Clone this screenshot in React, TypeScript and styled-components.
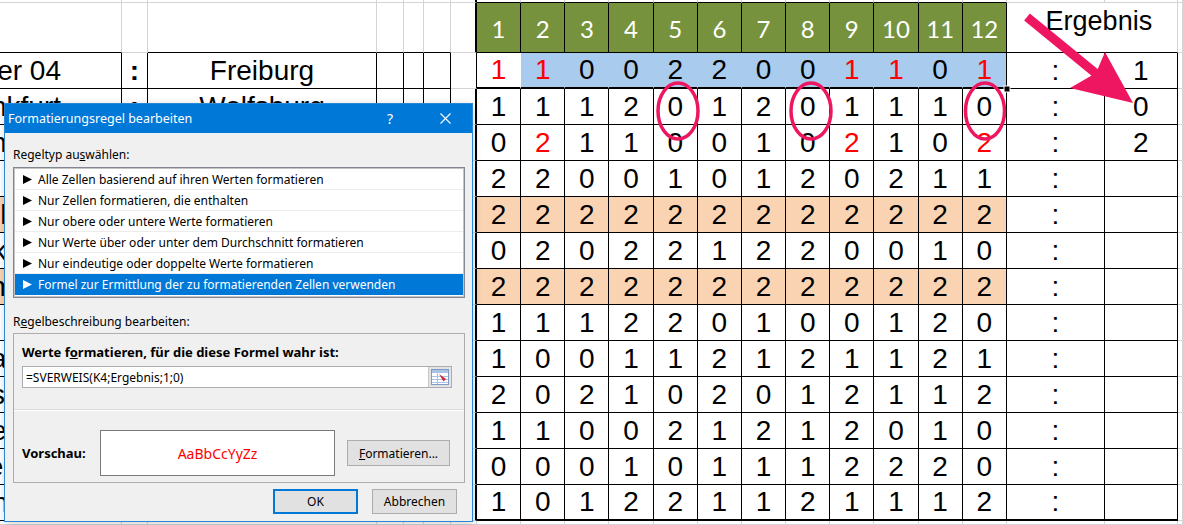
import React from "react";
import styled, { createGlobalStyle } from "styled-components";

// Tipp-Tabelle (12 Spiele) mit dem Dialog "Formatierungsregel bearbeiten"

type Line = "grid" | "thin" | "thick" | "none";

const border = (l: Line = "grid") => {
  switch (l) {
    case "thin":
      return "1px solid #000";
    case "thick":
      return "2px solid #000";
    case "none":
      return "1px solid transparent";
    default:
      return "1px solid #d4d4d4";
  }
};

const tipps: number[][] = [
  [1, 1, 0, 0, 2, 2, 0, 0, 1, 1, 0, 1],
  [1, 1, 1, 2, 0, 1, 2, 0, 1, 1, 1, 0],
  [0, 2, 1, 1, 0, 0, 1, 0, 2, 1, 0, 2],
  [2, 2, 0, 0, 1, 0, 1, 2, 0, 2, 1, 1],
  [2, 2, 2, 2, 2, 2, 2, 2, 2, 2, 2, 2],
  [0, 2, 0, 2, 2, 1, 2, 2, 0, 0, 1, 0],
  [2, 2, 2, 2, 2, 2, 2, 2, 2, 2, 2, 2],
  [1, 1, 1, 2, 2, 0, 1, 0, 0, 1, 2, 0],
  [1, 0, 0, 1, 1, 2, 1, 2, 1, 1, 2, 1],
  [2, 0, 2, 1, 0, 2, 0, 1, 2, 1, 1, 2],
  [1, 1, 0, 0, 2, 1, 2, 1, 2, 0, 1, 0],
  [0, 0, 0, 1, 0, 1, 1, 1, 2, 2, 2, 0],
  [1, 0, 1, 2, 2, 1, 1, 2, 1, 1, 1, 2],
];

const spiele: [string, string][] = [
  ["Bayer 04", "Freiburg"],
  ["Frankfurt", "Wolfsburg"],
  ["Hannover", "Mainz 05"],
  ["Hertha BSC", "Augsburg"],
  ["Hoffenheim", "Leipzig"],
  ["Schalke 04", "Bremen"],
  ["Dortmund", "Hamburg"],
  ["Köln", "Stuttgart"],
  ["Bayern", "Gladbach"],
  ["Augsburg", "Hertha"],
  ["Bremen", "Köln"],
  ["Leipzig", "Schalke 04"],
  ["Mainz 05", "Bayern"],
];

const ergebnisse = ["1", "0", "2"];
const rot: Record<number, number[]> = { 0: [0, 1, 8, 9, 11], 2: [1, 8, 11] };
const orangeRows = [4, 6];

const regeltypen = [
  "Alle Zellen basierend auf ihren Werten formatieren",
  "Nur Zellen formatieren, die enthalten",
  "Nur obere oder untere Werte formatieren",
  "Nur Werte über oder unter dem Durchschnitt formatieren",
  "Nur eindeutige oder doppelte Werte formatieren",
  "Formel zur Ermittlung der zu formatierenden Zellen verwenden",
];

const App: React.FC = () => {
  const cells: React.ReactNode[] = [];

  // oberer Rand
  for (let c = 0; c < 22; c++) {
    cells.push(
      <Cell
        key={`t${c}`}
        $r={c === 6 ? "thick" : "grid"}
        $b={c >= 7 && c <= 18 ? "thin" : "grid"}
      />
    );
  }

  // Kopfzeile
  for (let c = 0; c < 6; c++) {
    cells.push(<Cell key={`h${c}`} $b={c === 1 ? "grid" : "thin"} />);
  }
  cells.push(<Cell key="h6" $r="thick" />);
  for (let i = 1; i <= 12; i++) {
    cells.push(
      <HeadCell key={`hn${i}`} $r="thin" $b="thin">
        {i}
      </HeadCell>
    );
  }
  cells.push(
    <TitleCell key="herg" $b="thin">
      Ergebnis
    </TitleCell>
  );
  cells.push(<Cell key="h21" />);

  // Datenzeilen
  tipps.forEach((row, r) => {
    const first = r === 0;
    const last = r === tipps.length - 1;
    const orange = orangeRows.includes(r) ? "#f9d3b2" : undefined;
    const bottom: Line = first || last ? "thick" : "thin";

    cells.push(
      <TeamCell key={`a${r}`} $edge $r="thin" $b="thin" $bg={orange}>
        {spiele[r][0]}
      </TeamCell>
    );
    cells.push(
      <ColonCell key={`b${r}`} $bold $r="thin" $b="thin">
        :
      </ColonCell>
    );
    cells.push(
      <TeamCell key={`c${r}`} $r="thin" $b="thin">
        {spiele[r][1]}
      </TeamCell>
    );
    cells.push(<Cell key={`d${r}`} $r="thin" $b="thin" />);
    cells.push(<Cell key={`e${r}`} $r="thin" $b="thin" />);
    cells.push(<Cell key={`f${r}`} $r="thin" $b="thin" />);
    cells.push(<Cell key={`g${r}`} $r={first ? "thin" : "thick"} />);

    row.forEach((v, i) => {
      let bg = orange;
      let right: Line = "thin";
      if (first) {
        bg = i === 0 ? "#fff" : "#a9cbee";
        right = i === 11 ? "thin" : "none";
      }
      cells.push(
        <NumCell
          key={`n${r}-${i}`}
          $r={right}
          $b={bottom}
          $bg={bg}
          $red={(rot[r] || []).includes(i)}
        >
          {v}
        </NumCell>
      );
    });

    cells.push(
      <ColonCell key={`s${r}`} $r="thin" $b={last ? "thick" : "thin"}>
        :
      </ColonCell>
    );
    cells.push(
      <NumCell key={`e${r}x`} $r="thin" $b={last ? "thick" : "thin"}>
        {ergebnisse[r] ?? ""}
      </NumCell>
    );
    cells.push(<Cell key={`z${r}`} />);
  });

  // unterer Rand
  for (let c = 0; c < 22; c++) {
    cells.push(<Cell key={`u${c}`} />);
  }

  return (
    <>
      <GlobalStyle />
      <Page>
        <Sheet>{cells}</Sheet>

        <Overlay width="1183" height="525" viewBox="0 0 1183 525">
          <ellipse cx="678" cy="111" rx="20" ry="28" fill="none" stroke="#ee1660" strokeWidth="3.5" />
          <ellipse cx="811" cy="111" rx="20" ry="28" fill="none" stroke="#ee1660" strokeWidth="3.5" />
          <ellipse cx="985" cy="111" rx="19.5" ry="28" fill="none" stroke="#ee1660" strokeWidth="3.5" />
          <line x1="1027" y1="17" x2="1099" y2="76" stroke="#ee1660" strokeWidth="9" />
          <polygon points="1133,103 1070,88 1096,73 1105,52" fill="#ee1660" />
          <rect x="1004" y="86" width="6" height="6" fill="#000" stroke="#fff" strokeWidth="1" />
        </Overlay>

        <Dialog>
          <TitleBar>
            <TitleText>Formatierungsregel bearbeiten</TitleText>
            <TitleButton $gap={9}>?</TitleButton>
            <TitleButton $gap={4}>
              <svg width="11" height="11" viewBox="0 0 11 11">
                <path d="M0.5 0.5 L10.5 10.5 M10.5 0.5 L0.5 10.5" stroke="#fff" strokeWidth="1.1" />
              </svg>
            </TitleButton>
          </TitleBar>

          <Body>
            <Label $mt={13}>
              Regeltyp au<AccessKey>s</AccessKey>wählen:
            </Label>
            <ListBox>
              {regeltypen.map((t, i) => (
                <ListItem key={t} $selected={i === regeltypen.length - 1}>
                  <svg width="9" height="9" viewBox="0 0 9 9">
                    <polygon points="0,0 9,4.5 0,9" fill="currentColor" />
                  </svg>
                  {t}
                </ListItem>
              ))}
            </ListBox>

            <Label $mt={15}>
              R<AccessKey>e</AccessKey>gelbeschreibung bearbeiten:
            </Label>
            <DescBox>
              <BoldLabel>
                Werte f<AccessKey>o</AccessKey>rmatieren, für die diese Formel wahr ist:
              </BoldLabel>
              <FormulaField>
                <FormulaText>=SVERWEIS(K4;Ergebnis;1;0)</FormulaText>
                <RangeButton>
                  <svg width="18" height="16" viewBox="0 0 18 16">
                    <rect x="0.5" y="0.5" width="17" height="15" fill="#fff" stroke="#7f9dc4" />
                    <rect x="1" y="1" width="16" height="3" fill="#a9c3e6" />
                    <path d="M1 7.5 H17 M1 10.5 H17 M1 13.5 H17 M6.5 4 V15" stroke="#a9c3e6" />
                    <path d="M8 5 L15 10 L12.5 12.5 Z" fill="#d8262e" />
                  </svg>
                </RangeButton>
              </FormulaField>
              <Separator />
              <PreviewRow>
                <PreviewLabel>Vorschau:</PreviewLabel>
                <PreviewBox>AaBbCcYyZz</PreviewBox>
                <FormatButton>
                  <AccessKey>F</AccessKey>ormatieren...
                </FormatButton>
              </PreviewRow>
            </DescBox>

            <Footer>
              <DialogButton $primary>OK</DialogButton>
              <DialogButton>Abbrechen</DialogButton>
            </Footer>
          </Body>
        </Dialog>
      </Page>
    </>
  );
};

const GlobalStyle = createGlobalStyle`
  html, body {
    margin: 0;
    padding: 0;
    background: #fff;
  }
  body {
    overflow: hidden;
  }
`;

const Page = styled.div`
  position: relative;
  width: 1183px;
  height: 525px;
  overflow: hidden;
  background: #fff;
`;

const Sheet = styled.div`
  display: grid;
  grid-template-columns: 122px 26px 229px 27px 20px 27px 26px repeat(12, 44.1667px) 98px 73px 5px;
  grid-template-rows: 3px 50px repeat(13, 36px) 4px;
  width: 1183px;
`;

const Cell = styled.div<{ $r?: Line; $b?: Line; $bg?: string }>`
  box-sizing: border-box;
  display: flex;
  align-items: center;
  justify-content: center;
  overflow: hidden;
  white-space: nowrap;
  background: ${(p) => p.$bg ?? "#fff"};
  border-right: ${(p) => border(p.$r)};
  border-bottom: ${(p) => border(p.$b)};
`;

const NumCell = styled(Cell)<{ $red?: boolean }>`
  font-family: "Liberation Sans", Arial, sans-serif;
  font-size: 28px;
  color: ${(p) => (p.$red ? "#ff0000" : "#000")};
`;

const TeamCell = styled(NumCell)<{ $edge?: boolean }>`
  justify-content: ${(p) => (p.$edge ? "flex-end" : "center")};
  padding-right: ${(p) => (p.$edge ? "60px" : "0")};
`;

const ColonCell = styled(NumCell)<{ $bold?: boolean }>`
  font-weight: ${(p) => (p.$bold ? 700 : 400)};
`;

const HeadCell = styled(Cell)`
  background: #76923c;
  color: #fff;
  font-family: Lato, "Liberation Sans", sans-serif;
  font-size: 24px;
  padding-top: 2px;
`;

const TitleCell = styled(Cell)`
  grid-column: span 2;
  align-items: flex-start;
  padding: 3px 0 0 14px;
  font-family: "Liberation Sans", Arial, sans-serif;
  font-size: 27px;
  color: #000;
`;

const Overlay = styled.svg`
  position: absolute;
  left: 0;
  top: 0;
  pointer-events: none;
`;

const Dialog = styled.div`
  position: absolute;
  left: 4px;
  top: 103px;
  width: 469px;
  height: 419px;
  box-sizing: border-box;
  display: flex;
  flex-direction: column;
  background: #f0f0f0;
  border: 1px solid #2b86d6;
  font-family: "Noto Sans", "Open Sans", sans-serif;
  font-size: 12px;
  color: #000;
  box-shadow: 1px 2px 8px rgba(0, 0, 0, 0.18);
`;

const TitleBar = styled.div`
  flex: none;
  height: 29px;
  display: flex;
  align-items: center;
  padding-left: 3px;
  background: #0078d7;
  color: #fff;
`;

const TitleText = styled.div`
  flex: 1;
  font-size: 12.5px;
`;

const TitleButton = styled.div<{ $gap?: number }>`
  width: 46px;
  height: 29px;
  display: flex;
  align-items: center;
  justify-content: center;
  margin-right: ${(p) => p.$gap ?? 0}px;
  font-size: 14px;
`;

const Body = styled.div`
  flex: 1;
  display: flex;
  flex-direction: column;
  padding: 0 7px 0 8px;
`;

const Label = styled.div<{ $mt: number }>`
  margin-top: ${(p) => p.$mt}px;
  height: 18px;
  line-height: 18px;
`;

const AccessKey = styled.span`
  text-decoration: underline;
`;

const ListBox = styled.div`
  margin-top: 3px;
  height: 131px;
  box-sizing: border-box;
  padding: 1px;
  border: 1px solid #828790;
  box-shadow: inset 0 0 0 1px #c4c4c4;
  background: #fff;
`;

const ListItem = styled.div<{ $selected?: boolean }>`
  height: 21px;
  box-sizing: border-box;
  display: flex;
  align-items: center;
  gap: 6px;
  padding-left: 8px;
  border-bottom: 1px solid ${(p) => (p.$selected ? "#0078d7" : "#ececec")};
  background: ${(p) => (p.$selected ? "#0078d7" : "#fff")};
  color: ${(p) => (p.$selected ? "#fff" : "#000")};
`;

const DescBox = styled.div`
  margin-top: 2px;
  height: 150px;
  box-sizing: border-box;
  display: flex;
  flex-direction: column;
  padding: 0 12px 0 8px;
  border: 1px solid #adadad;
`;

const BoldLabel = styled.div`
  margin-top: 9px;
  height: 18px;
  line-height: 18px;
  font-weight: 700;
  font-size: 13px;
`;

const FormulaField = styled.div`
  margin-top: 5px;
  height: 22px;
  box-sizing: border-box;
  display: flex;
  align-items: stretch;
  border: 1px solid #abadb3;
  background: #fff;
`;

const FormulaText = styled.div`
  flex: 1;
  display: flex;
  align-items: center;
  padding-left: 3px;
`;

const RangeButton = styled.div`
  width: 22px;
  display: flex;
  align-items: center;
  justify-content: center;
  background: #e3e3e3;
  border-left: 1px solid #c8c8c8;
`;

const Separator = styled.div`
  margin: 21px -12px 0 -8px;
  border-top: 1px solid #dcdcdc;
  border-bottom: 1px solid #fff;
`;

const PreviewRow = styled.div`
  margin-top: 19px;
  height: 46px;
  display: flex;
  align-items: center;
`;

const PreviewLabel = styled.div`
  width: 78px;
  font-weight: 700;
  font-size: 13px;
`;

const PreviewBox = styled.div`
  width: 235px;
  height: 46px;
  box-sizing: border-box;
  display: flex;
  align-items: center;
  justify-content: center;
  border: 1px solid #7a7a7a;
  background: #fff;
  color: #ff0000;
  font-size: 14px;
`;

const FormatButton = styled.div`
  margin-left: 12px;
  width: 103px;
  height: 26px;
  box-sizing: border-box;
  display: flex;
  align-items: center;
  justify-content: center;
  background: #e1e1e1;
  border: 1px solid #adadad;
`;

const Footer = styled.div`
  margin-top: 6px;
  padding-right: 8px;
  display: flex;
  justify-content: flex-end;
  gap: 14px;
`;

const DialogButton = styled.div<{ $primary?: boolean }>`
  width: 85px;
  height: 25px;
  box-sizing: border-box;
  display: flex;
  align-items: center;
  justify-content: center;
  background: #e1e1e1;
  border: ${(p) => (p.$primary ? "2px solid #0078d7" : "1px solid #adadad")};
`;

export default App;
